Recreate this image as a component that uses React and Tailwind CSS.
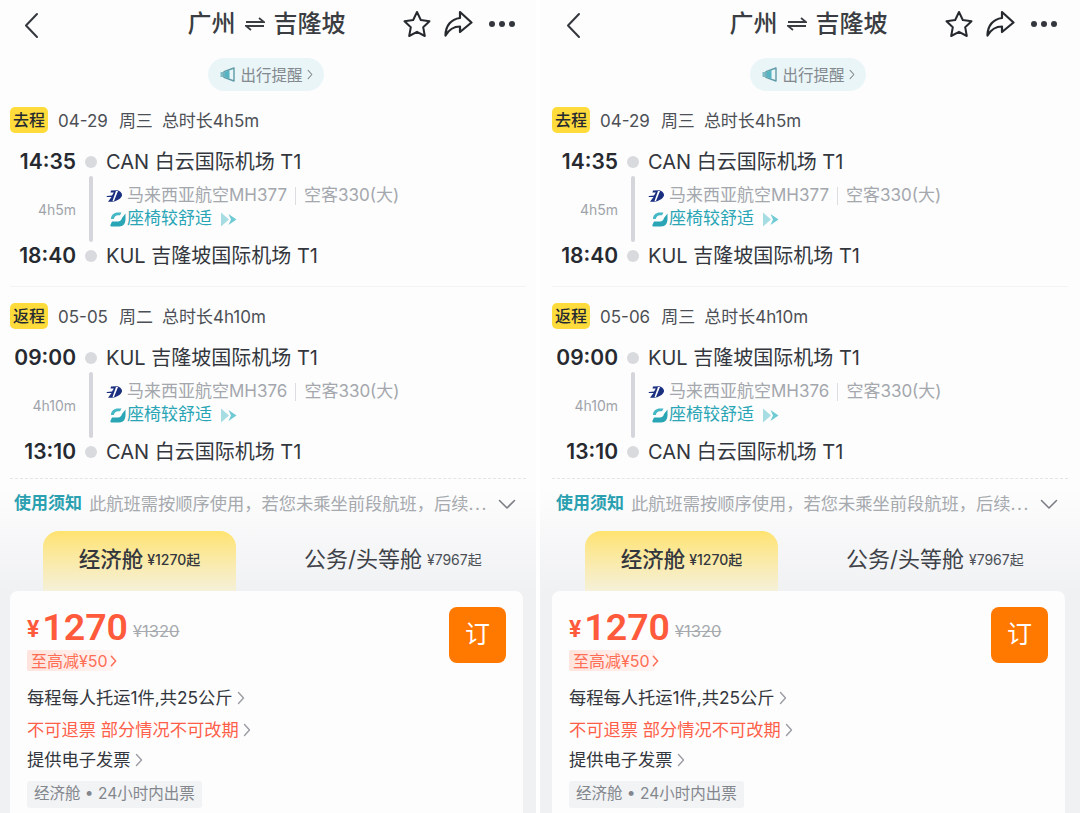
const FONT = { fontFamily: '"Inter","Noto Sans CJK SC",sans-serif' };

function Chevron({ className = "", size = 8, h = 14, sw = 1.4 }) {
  return (
    <svg width={size} height={h} viewBox="0 0 8 14" fill="none" stroke="currentColor" strokeWidth={sw} strokeLinecap="round" strokeLinejoin="round" className={className}>
      <path d="M1.5 1.5 L6.5 7 L1.5 12.5" />
    </svg>
  );
}

function Logo() {
  return (
    <svg width="17" height="14" viewBox="0 0 17 14" className="shrink-0">
      <path d="M5 1.5 L11 1.2 C14 1.5 16.5 4.5 16 6.5 C15 10 10 12.5 6 12.8 L2 12.8 L5.5 8 L0.5 8 L1 7 L6 6.6 L7.8 3.5 L4.5 3.5 Z" fill="#1b2f80" />
      <path d="M10 2 L12 2 L8 12 L6.5 12 Z" fill="#ffffff" />
    </svg>
  );
}

function SeatIcon() {
  return (
    <svg width="18" height="17" viewBox="0 0 18 17" className="shrink-0">
      <path d="M2 8 C2 4 5 1.5 9 1.5 L12.5 1.5 L11 4.2 L9 4.2 C7 4.2 5.2 5.5 4.8 8 Z" fill="#45b8c6" />
      <path d="M16.5 2.5 L16.5 8 C16.5 12.5 14.5 15.5 10 15.5 L2.5 15.5 C1.5 15.5 1 14.8 1.5 13.8 L3 10.5 L9 10.5 C11 10.5 12.5 9 13 7 Z" fill="#2aa5b5" />
    </svg>
  );
}

function DoubleArrow() {
  return (
    <svg width="16" height="15" viewBox="0 0 16 15" className="shrink-0">
      <path d="M0 0.5 L8 7.5 L0 14.5 Z" fill="#a5dde3" />
      <path d="M7.5 2 L15.5 7.5 L7.5 13 L10 7.5 Z" fill="#6fcad4" />
    </svg>
  );
}

function Leg({ dep, arr, dur, flight }) {
  return (
    <div className="flex flex-col">
      <div className="flex items-center h-[24px]">
        <span className="w-[76px] text-right text-[21px] font-semibold text-[#262a30]">{dep.t}</span>
        <span className="w-[12px] h-[12px] rounded-full bg-[#d8dade] ml-[9px]" />
        <span className="ml-[9px] text-[20px] text-[#33373d] whitespace-nowrap">{dep.a}</span>
      </div>
      <div className="flex h-[68px] mt-[1px] items-stretch">
        <span className="w-[76px] self-center text-right text-[14px] text-[#a0a4aa]">{dur}</span>
        <span className="w-[4px] rounded-full bg-[#d4d6db] ml-[13px] my-[1px]" />
        <div className="ml-[13px] flex flex-col pt-[9px]">
          <div className="flex items-center h-[24px]">
            <Logo />
            <span className="ml-[4px] text-[17px] text-[#a4a7ad] whitespace-nowrap">{flight}</span>
            <span className="mx-[8px] w-px h-[18px] bg-[#dcdee1]" />
            <span className="text-[17px] text-[#a4a7ad] whitespace-nowrap">空客330(大)</span>
          </div>
          <div className="flex items-center h-[22px] ml-[3px]">
            <SeatIcon />
            <span className="text-[17px] text-[#2aa5b5] whitespace-nowrap">座椅较舒适</span>
            <span className="ml-[9px]"><DoubleArrow /></span>
          </div>
        </div>
      </div>
      <div className="flex items-center h-[24px] mt-[1px]">
        <span className="w-[76px] text-right text-[21px] font-semibold text-[#262a30]">{arr.t}</span>
        <span className="w-[12px] h-[12px] rounded-full bg-[#d8dade] ml-[9px]" />
        <span className="ml-[9px] text-[20px] text-[#33373d] whitespace-nowrap">{arr.a}</span>
      </div>
    </div>
  );
}

function Trip({ tag, date, day, total, leg }) {
  return (
    <div className="flex flex-col">
      <div className="flex items-center h-[26px] pl-[10px]">
        <span className="w-[38px] h-[26px] rounded-[5px] bg-[#ffdc3c] text-[#262a30] text-[16px] font-medium flex items-center justify-center whitespace-nowrap">{tag}</span>
        <span className="ml-[10px] pt-[3px] text-[17px] text-[#4c5056] whitespace-nowrap">{date}</span>
        <span className="ml-[11px] pt-[3px] text-[17px] text-[#4c5056] whitespace-nowrap">{day}</span>
        <span className="ml-[9px] pt-[3px] text-[17px] text-[#4c5056] whitespace-nowrap">{total}</span>
      </div>
      <div className="mt-[17px]"><Leg {...leg} /></div>
    </div>
  );
}

function Phone({ ret, outer }) {
  return (
    <div className={"relative h-[813px] overflow-hidden bg-gradient-to-b from-[#fdfdfd] from-[60%] to-[#f0f1f3] to-[73%] " + outer.panel} style={FONT}>
      <div className={outer.inner}>
        <header className="relative h-[48px] flex items-center justify-center">
          <svg width="18" height="28" viewBox="0 0 18 28" fill="none" stroke="#33373d" strokeWidth="2" strokeLinecap="round" strokeLinejoin="round" className="absolute left-[23px] top-[12px]">
            <path d="M14 2 L3 13.5 L14 25" />
          </svg>
          <div className="flex items-center text-[24px] font-medium text-[#3a3d42] whitespace-nowrap -ml-[3px]">
            <span>广州</span>
            <svg width="20" height="14" viewBox="0 0 20 14" fill="none" stroke="#3a3d42" strokeWidth="1.8" className="mx-[9px]">
              <path d="M1 5 H19 L14 1" />
              <path d="M19 9 H1 L6 13" />
            </svg>
            <span>吉隆坡</span>
          </div>
          <svg width="30" height="28" viewBox="0 0 30 28" fill="none" stroke="#26292e" strokeWidth="2" strokeLinejoin="round" className="absolute left-[402px] top-[10px]">
            <path d="M15 2 L18.8 10 L27.5 11.2 L21.2 17.2 L22.8 26 L15 21.8 L7.2 26 L8.8 17.2 L2.5 11.2 L11.2 10 Z" />
          </svg>
          <svg width="30" height="28" viewBox="0 0 30 28" fill="none" stroke="#26292e" strokeWidth="2.2" strokeLinejoin="round" strokeLinecap="round" className="absolute left-[443px] top-[10px]">
            <path d="M17 2 L28.5 12.5 L17 22 L17 16.5 C11 16.5 6 19.5 2.5 25.5 C2.5 16 8 9 17 8 Z" />
          </svg>
          <div className="absolute left-[489px] top-[21px] flex gap-[4px]">
            <span className="w-[6px] h-[6px] rounded-full bg-[#33373d]" />
            <span className="w-[6px] h-[6px] rounded-full bg-[#33373d]" />
            <span className="w-[6px] h-[6px] rounded-full bg-[#33373d]" />
          </div>
        </header>

        <div className="mt-[10px] flex justify-center pr-[4px]">
          <div className="h-[33px] w-[116px] rounded-full bg-[#e9f5f7] flex items-center justify-center gap-[4px]">
            <svg width="17" height="15" viewBox="0 0 16 15" className="shrink-0">
              <path d="M1 5 L4 5 L4 10 L1 10 Z" fill="#7fbcc6" />
              <path d="M4.5 4.6 L14.5 1 L14.5 14 L4.5 10.4 Z" fill="none" stroke="#5f9aa6" strokeWidth="1.4" strokeLinejoin="round" />
              <path d="M5 5 L10 3.2 L10 11.8 L5 10 Z" fill="#56b3c1" />
            </svg>
            <span className="pt-[3px] text-[15.5px] text-[#83898f] whitespace-nowrap">出行提醒</span>
            <Chevron size={6} h={11} className="text-[#83898f]" />
          </div>
        </div>

        <div className="mt-[16px]">
          <Trip tag="去程" date="04-29" day="周三" total="总时长4h5m"
            leg={{ dep: { t: "14:35", a: "CAN 白云国际机场 T1" }, arr: { t: "18:40", a: "KUL 吉隆坡国际机场 T1" }, dur: "4h5m", flight: "马来西亚航空MH377" }} />
        </div>

        <div className="mt-[18px] mx-[10px] h-px bg-[#f3f4f5]" />

        <div className="mt-[16px]">
          <Trip tag="返程" date={ret.date} day={ret.day} total="总时长4h10m"
            leg={{ dep: { t: "09:00", a: "KUL 吉隆坡国际机场 T1" }, arr: { t: "13:10", a: "CAN 白云国际机场 T1" }, dur: "4h10m", flight: "马来西亚航空MH376" }} />
        </div>

        <div className="mt-[14px] mx-[10px] border-t border-dashed border-[#e3e4e6]" />

        <div className="mt-[13px] pl-[14px] flex items-center h-[24px]">
          <span className="text-[17px] font-semibold text-[#2aa0b0] whitespace-nowrap">使用须知</span>
          <span className="ml-[7px] w-[401px] text-[17.25px] text-[#a6a9ae] whitespace-nowrap">此航班需按顺序使用，若您未乘坐前段航班，后续<span className="tracking-[1.5px]">...</span></span>
          <svg width="18" height="11" viewBox="0 0 18 11" fill="none" stroke="#7b7f85" strokeWidth="1.6" strokeLinecap="round" strokeLinejoin="round" className="ml-[8px]">
            <path d="M1.5 1.5 L9 9 L16.5 1.5" />
          </svg>
        </div>

        <div className="mt-[15px] flex h-[60px]">
          <div className="ml-[43px] w-[193px] rounded-t-[16px] bg-gradient-to-b from-[#ffe36f] to-[#f5f0d8] flex items-start justify-center pt-[12px]">
            <span className="text-[21.5px] font-medium text-[#33373d] whitespace-nowrap">经济舱</span>
            <span className="ml-[4px] mt-[6px] text-[14px] font-medium text-[#33373d] whitespace-nowrap">¥1270起</span>
          </div>
          <div className="ml-[68px] flex items-start pt-[12px]">
            <span className="text-[22px] text-[#3e4248] whitespace-nowrap">公务/头等舱</span>
            <span className="ml-[5px] mt-[6px] text-[14px] text-[#4c5056] whitespace-nowrap">¥7967起</span>
          </div>
        </div>

        <div className="relative ml-[10px] w-[513px] h-[240px] rounded-t-[8px] bg-[#fdfdfd] pl-[17px] pt-[16px]">
          <div className="flex items-end h-[40px]">
            <span className="text-[23px] font-bold text-[#ff5a3c] mb-[6px] leading-none" style={{ fontFamily: '"Roboto",sans-serif' }}>¥</span>
            <span className="ml-[3px] text-[37.5px] font-semibold text-[#ff5a3c] leading-[40px]" style={{ fontFamily: '"Roboto",sans-serif' }}>1270</span>
            <span className="ml-[5px] mb-[8px] text-[16.5px] text-[#a6a9ae] line-through leading-none">¥1320</span>
          </div>
          <div className="mt-[3px] inline-flex items-center h-[21px] w-[86px] rounded-[2px] bg-gradient-to-r from-[#ffe3dd] to-[#fff5f3] pl-[4px] gap-[2px]">
            <span className="text-[16px] text-[#ff6d55] whitespace-nowrap">至高减¥50</span>
            <Chevron size={7} h={12} sw={1.7} className="text-[#ff6d55] shrink-0" />
          </div>
          <div className="mt-[13px] flex items-center h-[24px] gap-[4px]">
            <span className="text-[17.25px] text-[#33373d] whitespace-nowrap">每程每人托运1件,共25公斤</span>
            <Chevron size={8} h={14} className="text-[#9a9da3]" />
          </div>
          <div className="mt-[8px] flex items-center h-[24px] gap-[4px]">
            <span className="text-[17.25px] text-[#ff5f49] whitespace-nowrap">不可退票 部分情况不可改期</span>
            <Chevron size={8} h={14} className="text-[#9a9da3]" />
          </div>
          <div className="mt-[6px] flex items-center h-[24px] gap-[4px]">
            <span className="text-[17.25px] text-[#33373d] whitespace-nowrap">提供电子发票</span>
            <Chevron size={8} h={14} className="text-[#9a9da3]" />
          </div>
          <div className="mt-[9px] inline-flex items-center h-[27px] w-[175px] rounded-[3px] bg-[#f2f3f5] pl-[7px]">
            <span className="text-[15.5px] text-[#83878d] whitespace-nowrap">经济舱 • 24小时内出票</span>
          </div>
          <button className="absolute left-[439px] top-[16px] w-[57px] h-[56px] rounded-[8px] bg-[#ff7800] text-white text-[25px] flex items-center justify-center">订</button>
        </div>
      </div>
    </div>
  );
}

export default function App() {
  return (
    <div className="flex w-[1080px] h-[813px] bg-white overflow-hidden">
      <Phone ret={{ date: "05-05", day: "周二" }} outer={{ panel: "w-[536px]", inner: "w-[536px]" }} />
      <div className="w-[4px]" />
      <Phone ret={{ date: "05-06", day: "周三" }} outer={{ panel: "w-[540px]", inner: "w-[536px] ml-[2px]" }} />
    </div>
  );
}
